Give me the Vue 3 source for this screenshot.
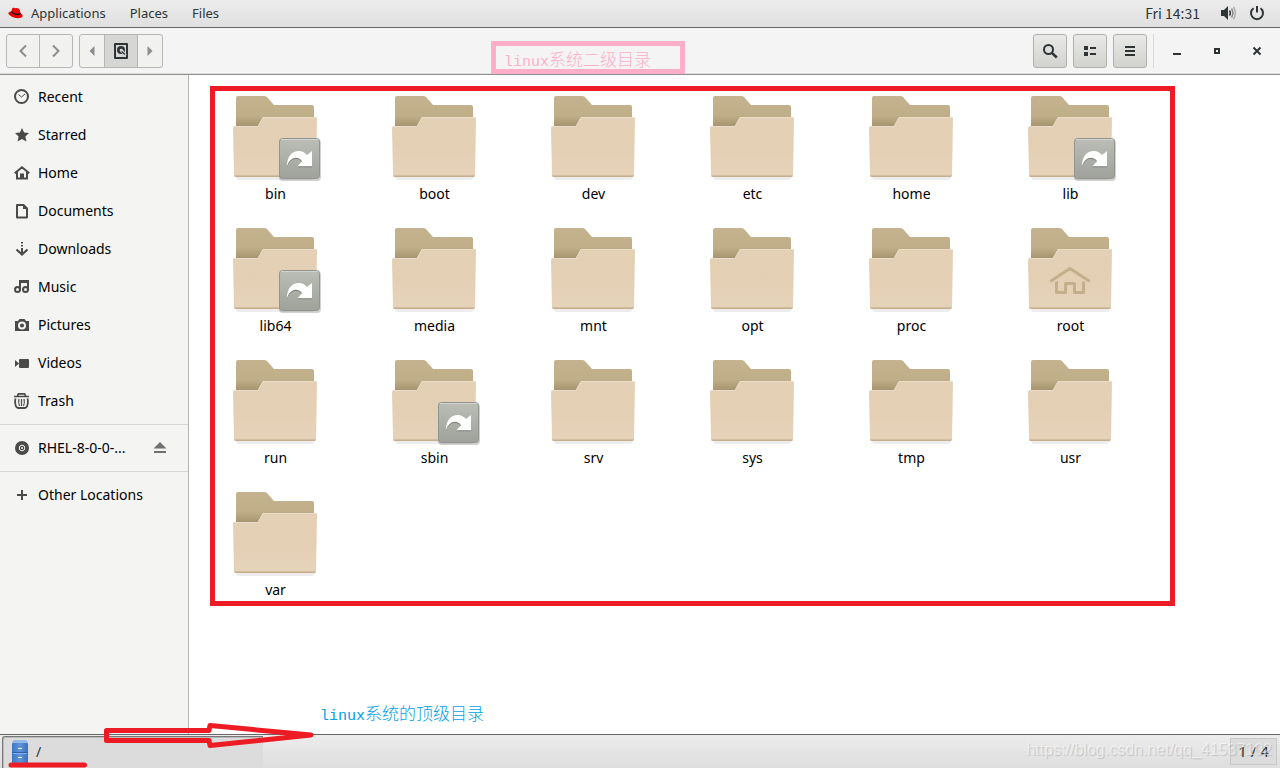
<script setup>
const menus = ['Applications', 'Places', 'Files']
const places = [
  ['Recent', 'recent'],
  ['Starred', 'star'],
  ['Home', 'home'],
  ['Documents', 'doc'],
  ['Downloads', 'down'],
  ['Music', 'music'],
  ['Pictures', 'camera'],
  ['Videos', 'video'],
  ['Trash', 'trash'],
].map(([label, icon]) => ({ label, icon }))
const links = ['bin', 'lib', 'lib64', 'sbin']
const folders = 'bin boot dev etc home lib lib64 media mnt opt proc root run sbin srv sys tmp usr var'
  .split(' ')
  .map((name) => ({ name, link: links.includes(name), home: name === 'root' }))
</script>

<template>
  <svg class="defs" aria-hidden="true">
    <defs>
      <linearGradient id="back" x1="0" y1="0" x2="0" y2="1">
        <stop offset="0" stop-color="#c4b38e" /><stop offset="0.6" stop-color="#c0ae89" /><stop offset="1" stop-color="#a08d69" />
      </linearGradient>
      <linearGradient id="front" x1="0" y1="0" x2="0" y2="1">
        <stop offset="0" stop-color="#e4d0b5" /><stop offset="0.5" stop-color="#e3cfb4" /><stop offset="1" stop-color="#e5d3ba" />
      </linearGradient>
      <linearGradient id="rim" x1="0" y1="0" x2="0" y2="1">
        <stop offset="0" stop-color="#e2ceb3" /><stop offset="1" stop-color="#bfa581" />
      </linearGradient>
      <linearGradient id="emblem" x1="0" y1="0" x2="0" y2="1">
        <stop offset="0" stop-color="#bbbeb7" /><stop offset="1" stop-color="#9fa29a" />
      </linearGradient>
      <linearGradient id="cabinet" x1="0" y1="0" x2="1" y2="0">
        <stop offset="0" stop-color="#3f76c4" /><stop offset="0.5" stop-color="#5e95de" /><stop offset="1" stop-color="#3c70bd" />
      </linearGradient>
    </defs>
    <symbol id="recent" viewBox="0 0 16 16"><circle cx="7.5" cy="7.5" r="6.5" fill="none" stroke="currentColor" stroke-width="2" /><path d="M4.5 5.5 7.5 8l3.5-3" fill="none" stroke="currentColor" stroke-width="1" /></symbol>
    <symbol id="star" viewBox="0 0 16 16"><path d="M8 1l2.1 4.6 4.9.5-3.6 3.4 1 4.9L8 12l-4.4 2.4 1-4.9L1 6.1l4.9-.5z" fill="currentColor" /></symbol>
    <symbol id="home" viewBox="0 0 16 16"><path d="M.7 8.2 8 2.3l7.3 5.9M3 7v6.500h4V9.500h2v4h4V7" fill="none" stroke="currentColor" stroke-width="2" /></symbol>
    <symbol id="doc" viewBox="0 0 16 16"><path d="M3 2h6.500L13 5.500V14.500H3z" fill="none" stroke="currentColor" stroke-width="2" stroke-linejoin="round" /><path d="M9 1v5h5z" fill="currentColor" /></symbol>
    <symbol id="down" viewBox="0 0 16 16"><path d="M7 1h2v1.500H7zM7 4h2v1.500H7zM7 7h2v5H7z" fill="currentColor" /><path d="M2.500 8.500 8 13.500l5.500-5" fill="none" stroke="currentColor" stroke-width="2.200" /></symbol>
    <symbol id="music" viewBox="0 0 16 16"><path d="M6 11V2h8v9M6 3h8" fill="none" stroke="currentColor" stroke-width="2" /><circle cx="3.500" cy="10.500" r="2.500" fill="none" stroke="currentColor" stroke-width="2" /><circle cx="11.500" cy="10.500" r="2.500" fill="none" stroke="currentColor" stroke-width="2" /></symbol>
    <symbol id="camera" viewBox="0 0 16 16"><path fill-rule="evenodd" d="M1 4h3l1.500-2h5L12 4h3v10H1zM8 4.500a4 4 0 100 8 4 4 0 000-8zM8 6.500a2 2 0 110 4 2 2 0 010-4z" fill="currentColor" /></symbol>
    <symbol id="video" viewBox="0 0 16 16"><path d="M6 4h8q1 0 1 1v7q0 1-1 1H6q-1 0-1-1V5q0-1 1-1zM1 5l4 3.500L1 12z" fill="currentColor" /></symbol>
    <symbol id="trash" viewBox="0 0 16 16"><path d="M0 3.500h15" stroke="currentColor" stroke-width="1.500" /><path d="M3.500 3 4.500.800h6L11.500 3M1.500 5.500q-1 4 .500 8 1 1.500 2.500 1.500h6q1.500 0 2.500-1.500 1.500-4 .500-8" fill="none" stroke="currentColor" stroke-width="1.800" /><path d="M5 6q-1 3.500.500 7M7.500 6v7M10 6q1 3.500-.500 7" fill="none" stroke="currentColor" stroke-width="1.200" /></symbol>
    <symbol id="disc" viewBox="0 0 16 16"><circle cx="8" cy="8" r="7" fill="currentColor" /><circle cx="8" cy="8" r="2.800" fill="none" stroke="#f4f4f2" stroke-width="1" /><circle cx="8" cy="8" r="1" fill="#f4f4f2" /></symbol>
    <symbol id="plus" viewBox="0 0 16 16"><path d="M3 8h10M8 3v10" stroke="currentColor" stroke-width="2" /></symbol>
  </svg>

  <div class="desktop">
    <header class="topbar">
      <svg class="hat" viewBox="0 0 16 12">
        <path d="M3.500 4.500 4.600.8Q5 .1 6.300.5q1.500.6 2.500.1 3 .2 3.600 2l.9 3.300Q16 7.600 15.700 9.500 14.500 12 10 11.700 4 11 .8 7.400-.8 4.800 3.500 4.500z" fill="#e00" />
        <path d="M3.500 4.500q1.500 2.300 5.500 3 4 .3 4.300-1.300" fill="none" stroke="#111" stroke-width="1.300" />
      </svg>
      <nav class="menus"><button v-for="m in menus" :key="m">{{ m }}</button></nav>
      <time>Fri 14:31</time>
      <svg class="sys" viewBox="0 0 16 16"><path d="M1 5h3l4-4v14l-4-4H1z" fill="#2e3436" /><path d="M9.500 5.500q1.800 2.500 0 5" fill="none" stroke="#2e3436" stroke-width="1.500" /><path d="M11.500 3.500q2.800 4.500 0 9" fill="none" stroke="#888" stroke-width="1.500" /><path d="M13.500 1.800q3.500 6.200 0 12.400" fill="none" stroke="#b0b0b0" stroke-width="1.500" /></svg>
      <svg class="sys power" viewBox="0 0 16 16"><path d="M4.500 3.300a6 6 0 107 0M8 1v6.500" fill="none" stroke="#2e3436" stroke-width="2" /></svg>
    </header>

    <div class="toolbar">
      <div class="group history">
        <button aria-label="Back"><svg viewBox="0 0 16 16"><path d="M11 2.500 5.500 8l5.500 5.500" fill="none" stroke="#8b8e8f" stroke-width="2" /></svg></button>
        <button aria-label="Forward"><svg viewBox="0 0 16 16"><path d="M5 2.500 10.500 8 5 13.500" fill="none" stroke="#8b8e8f" stroke-width="2" /></svg></button>
      </div>
      <div class="group path">
        <button aria-label="Earlier"><svg viewBox="0 0 16 16"><path d="M10.500 3v10l-5-5z" fill="#8b8e8f" /></svg></button>
        <button class="active" aria-label="Root"><svg viewBox="0 0 16 16"><path d="M2 1h12v14H2z" fill="none" stroke="#2e3436" stroke-width="2" stroke-linejoin="round" /><circle cx="8" cy="7" r="4" fill="#2e3436" /><path d="M8 7l4.500 5.500" stroke="#d6d6d4" stroke-width="3" /><circle cx="8" cy="7" r="1.300" fill="#d6d6d4" /><path d="M8.500 8.500l3.500 3" stroke="#2e3436" stroke-width="1.500" /></svg></button>
        <button aria-label="Later"><svg viewBox="0 0 16 16"><path d="M5.500 3v10l5-5z" fill="#8b8e8f" /></svg></button>
      </div>
      <div class="actions">
        <button class="tool" aria-label="Search"><svg viewBox="0 0 16 16"><circle cx="6.500" cy="6.500" r="4.500" fill="none" stroke="#2e3436" stroke-width="2" /><path d="M9.800 9.800l5 4.700" stroke="#2e3436" stroke-width="2.500" /></svg></button>
        <button class="tool" aria-label="View"><svg viewBox="0 0 16 16"><path d="M2 3h4v4H2zM2 9h4v4H2zM8 4h6v2H8zM8 10h6v2H8z" fill="#2e3436" /></svg></button>
        <button class="tool" aria-label="Menu"><svg viewBox="0 0 16 16"><path d="M3 3h10v2H3zM3 7h10v2H3zM3 11h10v2H3z" fill="#2e3436" /></svg></button>
      </div>
      <div class="window">
        <button aria-label="Minimize"><svg viewBox="0 0 16 16"><path d="M4 10h8v2H4z" fill="#2e3436" /></svg></button>
        <button aria-label="Restore"><svg viewBox="0 0 16 16"><path d="M6 6h4v4H6z" fill="none" stroke="#2e3436" stroke-width="2" /></svg></button>
        <button aria-label="Close"><svg viewBox="0 0 16 16"><path d="M4.500 4.500l7 7M11.500 4.500l-7 7" stroke="#2e3436" stroke-width="2" /></svg></button>
      </div>
      <div class="note pink"><span>linux</span>系统二级目录</div>
    </div>

    <div class="body">
      <aside class="sidebar">
        <a v-for="p in places" :key="p.label" href="#" class="place"><svg><use :href="'#' + p.icon" /></svg><span>{{ p.label }}</span></a>
        <hr />
        <div class="place">
          <a href="#" class="volume"><svg><use href="#disc" /></svg><span>RHEL-8-0-0-...</span></a>
          <button class="eject" aria-label="Eject"><svg viewBox="0 0 16 16"><path d="M8 2l6.500 6.500h-13zM2 11h12v2H2z" fill="#6d7173" /></svg></button>
        </div>
        <hr />
        <a href="#" class="place"><svg><use href="#plus" /></svg><span>Other Locations</span></a>
      </aside>
      <main class="files">
        <div class="grid">
          <button v-for="f in folders" :key="f.name" class="tile">
            <svg class="folder" viewBox="0 0 90 88">
              <path d="M3 81h79q-1 3-3 3H6q-3 0-3-3z" fill="#000" opacity="0.07" />
              <path d="M3 31V2q0-2 2-2h27l2 1 7 8h38q2 0 2 2v22H3z" fill="url(#back)" />
              <path d="M2 30h23l5-9h53q1 0 1 2l-1 56q0 2-2 2H3q-2 0-2-2L0 32q0-2 2-2z" fill="url(#front)" />
              <path d="M2 30.500h23l5-9h53" fill="none" stroke="#eadcc7" />
              <path d="M1 78.500h82q0 2.500-2 2.500H3q-2 0-2-2.500z" fill="url(#rim)" />
              <path v-if="f.home" d="M23.300 52.700 42 40.500l18.700 12.200M28.500 54.500v10h9V55.500h9v9h9v-10" fill="none" stroke="#c5ae8b" stroke-width="3" stroke-linecap="round" stroke-linejoin="round" />
              <template v-if="f.link">
                <rect x="46" y="43" width="42" height="42" rx="4" fill="#000" opacity="0.18" />
                <rect x="46.500" y="42.500" width="40" height="40" rx="3" fill="url(#emblem)" stroke="#92958e" />
                <path d="M48 43.500h37" stroke="#d2d4cf" />
                <path d="M53.700 71.700Q54.500 56 66 56q4.500 0 8 4l5-4v15.300H64.500l4.500-5q-2-3.500-6.500-3.500-6 .5-8.800 8.900z" fill="#777a73" />
                <path d="M53.700 70.700Q54.500 55 66 55q4.500 0 8 4l5-4v15.300H64.500l4.500-5q-2-3.500-6.500-3.500-6 .5-8.800 8.900z" fill="#fff" />
              </template>
            </svg>
            <span>{{ f.name }}</span>
          </button>
        </div>
      </main>
      <div class="frame"></div>
      <div class="note blue"><span>linux</span>系统的顶级目录</div>
    </div>

    <footer class="taskbar">
      <button class="task">
        <svg viewBox="0 0 16 24"><path d="M2 0h12l2 4v20H0V4z" fill="url(#cabinet)" /><path d="M2 0h12l2 3H0z" fill="#93b8e6" /><path d="M0 12.500h16" stroke="#2f62ad" /><path d="M1 13.500h14" stroke="#83aee8" /><path d="M6 8.500h4M6 17.500h4" stroke="#fff" /></svg>
        <span>/</span>
      </button>
      <span class="pager">1 / 4</span>
      <span class="watermark">https://blog.csdn.net/qq_41537102</span>
    </footer>
    <svg class="arrow" viewBox="0 0 330 50"><path d="M106.500 12.500H209l1-5 101 9.500-101 10.500-1-5H106.500zM11 47h73.500" fill="none" stroke="#ed1c24" stroke-width="5" stroke-linecap="round" stroke-linejoin="round" /></svg>
  </div>
</template>

<style>
body { background: #fff; }
</style>

<style scoped>
* { box-sizing: border-box; }
.defs { position: absolute; width: 0; height: 0; }
.desktop {
  position: relative; display: flex; flex-direction: column; min-height: 100vh;
  font-family: "Noto Sans", "Noto Sans CJK SC", sans-serif; font-size: 14px; line-height: 20px; color: #000;
}
button { margin: 0; padding: 0; border: 0; background: none; font: inherit; color: inherit; }
a { color: inherit; text-decoration: none; }
svg { display: block; flex: none; }
.topbar {
  display: flex; align-items: center; height: 28px; padding: 0 15px 2px 8px; color: #2e3436;
  background: linear-gradient(#ececec, #e0e0e0); border-bottom: 1px solid #666;
}
.hat { width: 15px; height: 12px; }
.menus { display: flex; gap: 24px; margin-left: 8px; flex: 1; font-size: 13px; }
.topbar time { font-family: "Noto Sans CJK SC", sans-serif; }
.sys { width: 16px; height: 16px; margin-left: 20px; }
.power { margin-left: 13px; }
.toolbar {
  position: relative; display: flex; align-items: center; gap: 6px; height: 47px; padding: 0 3px 0 6px;
  background: #f4f4f4; border-bottom: 1px solid #909090; box-shadow: inset 0 -1px #dedede;
}
.toolbar svg { width: 16px; height: 16px; }
.toolbar button { display: flex; align-items: center; justify-content: center; height: 32px; }
.group { display: flex; border: 1px solid #b6b6b3; border-radius: 3px; background: #f1f1f0; overflow: hidden; }
.group button { flex: 1; }
.group button + button { border-left: 1px solid #b6b6b3; }
.history { width: 67px; }
.path { width: 84px; }
.group .active { flex: none; width: 33px; background: #d6d6d4; }
.actions { display: flex; gap: 6px; margin-left: auto; margin-right: -3px; padding-right: 6px; border-right: 1px solid #d8d8d8; }
.toolbar .tool { width: 34px; height: 34px; border: 1px solid #b0b0ad; border-radius: 3px; background: linear-gradient(#e9e9e7, #d2d2cf); }
.window { display: flex; }
.window button { width: 40px; }
.body { position: relative; display: flex; flex: 1; }
.sidebar { width: 189px; padding-top: 3px; background: #f4f4f2; border-right: 1px solid #b2b2af; }
.place { display: flex; align-items: center; gap: 8px; height: 38px; padding: 0 20px 0 14px; }
.place svg { width: 16px; height: 16px; color: #4a4a48; }
.volume { display: flex; align-items: center; gap: 8px; flex: 1; }
.sidebar hr { height: 1px; margin: 4px 0; border: 0; background: #d5d5d2; }
.files { flex: 1; background: #fff; padding: 21px 7px; }
.grid { display: grid; grid-template-columns: repeat(auto-fill, 158px); column-gap: 1px; row-gap: 24px; }
.tile { display: flex; flex-direction: column; height: 108px; padding-left: 37px; }
.folder { width: 90px; height: 88px; }
.tile span { width: 85px; text-align: center; }
.frame { position: absolute; left: 210px; top: 11px; width: 965px; height: 520px; border: 5px solid #ed1c24; pointer-events: none; }
.note { position: absolute; font-family: "Noto Sans CJK SC", sans-serif; font-size: 17px; line-height: 20px; font-weight: 300; white-space: nowrap; }
.note span { font-family: "Liberation Mono", monospace; font-size: 15px; }
.pink { left: 491px; top: 13px; width: 194px; height: 33px; padding: 3px 8px; border: 5px solid #ffaec9; color: #ffaec9; }
.blue { left: 320px; bottom: 7px; color: #00a2e8; }
.taskbar {
  position: relative; display: flex; align-items: flex-start; justify-content: space-between; height: 34px; padding: 1px 3px 0 2px;
  border-top: 1px solid #666; background: linear-gradient(#ececec, #dedede); color: #2e3436;
}
.task { display: flex; align-items: center; gap: 8px; width: 261px; height: 32px; padding: 0 9px 2px; border: 1px solid #777; border-width: 1px 0 0 1px; border-radius: 3px 0 0 0; background: #dcdcdc; box-shadow: inset 1px 1px #bbb; }
.task svg { width: 16px; height: 24px; }
.pager { width: 47px; height: 27px; margin-top: 2px; border: 1px solid #c8c8c8; background: #dcdcdc; text-align: center; font-size: 15px; line-height: 24px; }
.watermark { position: absolute; right: 8px; top: 5px; font-family: "Liberation Sans", sans-serif; font-size: 16px; color: rgba(255, 255, 255, 0.5); text-shadow: 1px 1px 1px rgba(0, 0, 0, 0.15); }
.arrow { position: absolute; left: 0; bottom: 0; width: 330px; height: 50px; pointer-events: none; }
</style>
